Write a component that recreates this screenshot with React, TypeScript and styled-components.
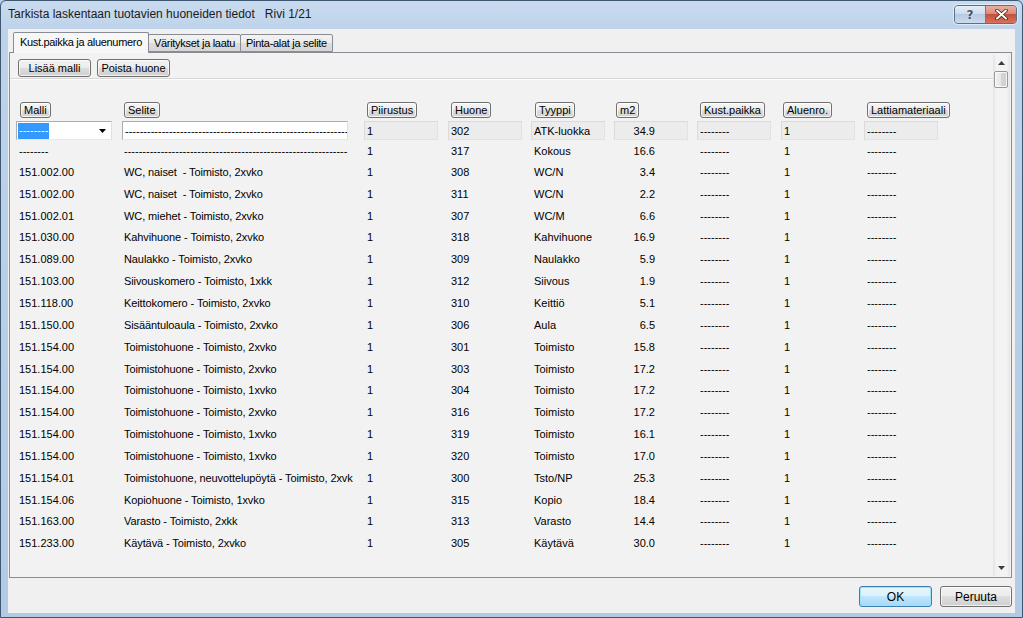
import React from "react";
import styled, { createGlobalStyle } from "styled-components";

const GlobalStyle = createGlobalStyle`
  html, body {
    margin: 0;
    padding: 0;
    background: #b8cde6;
  }
  body {
    font-family: "Liberation Sans", Arial, sans-serif;
    font-size: 11px;
    color: #000;
  }
`;

const COLUMNS = "106px 242px 84px 83px 83px 83px 84px 83px 74px";
const DASH = "--------";
const LONG_DASH = "-".repeat(61);

const Window = styled.div`
  width: 1023px;
  height: 618px;
  box-sizing: border-box;
  display: flex;
  flex-direction: column;
  border: 1px solid #3f5872;
  border-radius: 6px 6px 0 0;
  background: linear-gradient(#c9dbef, #bed3ea 28px, #b3cae5);
  overflow: hidden;
`;

const TitleBar = styled.div`
  height: 28px;
  flex: none;
  display: flex;
  align-items: flex-start;
  justify-content: space-between;
  padding: 0 5px 0 7px;
`;

const TitleText = styled.div`
  font-size: 12px;
  line-height: 12px;
  margin-top: 7px;
  color: #1b1b1b;
  white-space: pre;
`;

const CaptionGroup = styled.div`
  display: flex;
  margin-top: 4px;
  border: 1px solid #5b6f8a;
  border-radius: 4px;
  overflow: hidden;
  box-shadow: 0 0 0 1px rgba(255, 255, 255, 0.5);
`;

const CaptionButton = styled.div<{ $close?: boolean }>`
  width: 30px;
  height: 17px;
  display: flex;
  align-items: center;
  justify-content: center;
  font-family: "DejaVu Sans", sans-serif;
  font-weight: bold;
  font-size: 12px;
  color: #3e536e;
  text-shadow: 0 0 2px #fff;
  background: ${(p) =>
    p.$close
      ? "linear-gradient(#eab0a2, #d98a77 45%, #c7503a 50%, #d4745b)"
      : "linear-gradient(#e4edf8, #cddcee 45%, #b6cae3 50%, #cbdbef)"};
  & + & {
    border-left: 1px solid #6a7c93;
  }
`;

const Client = styled.div`
  flex: 1;
  margin: 0 7px 4px 7px;
  background: #f0f0f0;
  display: flex;
  flex-direction: column;
`;

const TabRow = styled.div`
  height: 20px;
  margin-top: 3px;
  padding-left: 5px;
  display: flex;
  align-items: flex-end;
  position: relative;
  z-index: 1;
`;

const Tab = styled.div<{ $active?: boolean; $w: number }>`
  box-sizing: border-box;
  width: ${(p) => p.$w}px;
  height: ${(p) => (p.$active ? "21px" : "18px")};
  margin-bottom: ${(p) => (p.$active ? "-1px" : "0")};
  padding-top: ${(p) => (p.$active ? "3px" : "2px")};
  text-align: center;
  letter-spacing: -0.3px;
  border: 1px solid #898c95;
  border-bottom: ${(p) => (p.$active ? "none" : "1px solid #898c95")};
  border-radius: 2px 2px 0 0;
  background: ${(p) =>
    p.$active ? "#f7f7f7" : "linear-gradient(#f3f3f3, #ebebeb 50%, #dddddd 50%, #d6d6d6)"};
  white-space: nowrap;
  overflow: hidden;
  & + & {
    margin-left: ${(p) => (p.$active ? "0" : "-1px")};
  }
`;

const Panel = styled.div`
  height: 526px;
  box-sizing: border-box;
  margin: 0 3px 0 1px;
  border: 1px solid #898c95;
  background: #f2f2f2;
  display: flex;
`;

const PanelBody = styled.div`
  flex: 1;
  overflow: hidden;
  display: flex;
  flex-direction: column;
`;

const Toolbar = styled.div`
  display: flex;
  gap: 6px;
  padding: 6px 0 0 8px;
`;

const PushButton = styled.div<{ $w: number; $h: number; $default?: boolean }>`
  box-sizing: border-box;
  width: ${(p) => p.$w}px;
  height: ${(p) => p.$h}px;
  display: flex;
  align-items: center;
  justify-content: center;
  border: 1px solid ${(p) => (p.$default ? "#3c7fb1" : "#707070")};
  border-radius: 3px;
  background: ${(p) =>
    p.$default
      ? "linear-gradient(#eaf6fd, #d9f0fc 50%, #bee6fd 50%, #a7d9f5)"
      : "linear-gradient(#f2f2f2, #ebebeb 50%, #dddddd 50%, #cfcfcf)"};
  box-shadow: inset 0 0 0 1px ${(p) => (p.$default ? "#9fe0fb" : "rgba(255,255,255,0.7)")};
  font-size: ${(p) => (p.$h > 19 ? "12px" : "11px")};
  white-space: nowrap;
`;

const Etched = styled.div`
  margin-top: 1px;
  height: 0;
  border-top: 1px solid #d8d8d8;
  border-bottom: 1px solid #fdfdfd;
`;

const Table = styled.div`
  padding: 22px 0 0 6px;
  display: flex;
  flex-direction: column;
`;

const GridRow = styled.div<{ $h: number }>`
  display: grid;
  grid-template-columns: ${COLUMNS};
  height: ${(p) => p.$h}px;
  align-items: center;
`;

const HeaderButton = styled.div<{ $off: number }>`
  box-sizing: border-box;
  justify-self: start;
  margin-left: ${(p) => p.$off}px;
  height: 16px;
  padding: 0 3px;
  display: flex;
  align-items: center;
  border: 1px solid #707070;
  border-radius: 3px;
  background: linear-gradient(#f6f6f6, #ececec 50%, #dedede 50%, #d2d2d2);
  box-shadow: inset 0 0 0 1px rgba(255, 255, 255, 0.75);
  white-space: nowrap;
`;

const Combo = styled.div`
  box-sizing: border-box;
  width: 96px;
  height: 19px;
  border: 1px solid #abadb3;
  border-right-color: #dbdfe6;
  border-bottom-color: #e3e9ef;
  background: #fff;
  display: flex;
  align-items: center;
  justify-content: space-between;
  padding: 0 5px 0 1px;
`;

const Selected = styled.span`
  background: #3399ff;
  color: #fff;
  padding: 1px 1px 2px;
  line-height: 13px;
`;

const TextBox = styled.div<{ $w: number; $readOnly?: boolean; $right?: boolean }>`
  box-sizing: border-box;
  width: ${(p) => p.$w}px;
  height: 19px;
  border: 1px solid ${(p) => (p.$readOnly ? "#dadada" : "#abadb3")};
  border-right-color: ${(p) => (p.$readOnly ? "#e2e2e2" : "#dbdfe6")};
  border-bottom-color: ${(p) => (p.$readOnly ? "#e2e2e2" : "#e3e9ef")};
  background: ${(p) => (p.$readOnly ? "#ececec" : "#fff")};
  display: flex;
  align-items: center;
  justify-content: ${(p) => (p.$right ? "flex-end" : "flex-start")};
  padding: ${(p) => (p.$right ? "0 32px 0 0" : "0 0 0 2px")};
  overflow: hidden;
  white-space: pre;
`;

const Cell = styled.div<{ $pad: number; $right?: boolean; $w?: number }>`
  padding-left: ${(p) => (p.$right ? 0 : p.$pad)}px;
  padding-right: ${(p) => (p.$right ? 33 : 0)}px;
  width: ${(p) => (p.$w ? `${p.$w}px` : "auto")};
  box-sizing: border-box;
  text-align: ${(p) => (p.$right ? "right" : "left")};
  overflow: hidden;
  white-space: pre;
`;

const SeliteText = styled.span<{ $tight: boolean }>`
  letter-spacing: ${(p) => (p.$tight ? "-0.1px" : "0")};
`;

const ScrollBar = styled.div`
  width: 17px;
  margin: 2px 1px 1px 0;
  display: flex;
  flex-direction: column;
  background: linear-gradient(90deg, #e3e3e3, #f3f3f3 20%, #f3f3f3 80%, #e6e6e6);
`;

const ScrollArrow = styled.div`
  height: 16px;
  display: flex;
  align-items: center;
  justify-content: center;
`;

const Thumb = styled.div`
  height: 15px;
  margin: 0 2px 0 1px;
  border: 1px solid #979797;
  border-radius: 2px;
  background: linear-gradient(90deg, #f2f2f2, #e6e6e6 50%, #d6d6d6 50%, #cfcfcf);
  box-shadow: inset 0 0 0 1px rgba(255, 255, 255, 0.8);
`;

const Track = styled.div`
  flex: 1;
`;

const Footer = styled.div`
  flex: 1;
  display: flex;
  justify-content: flex-end;
  align-items: flex-start;
  gap: 8px;
  padding: 8px 3px 0 0;
`;

type Row = [string, string, string, string, string, string];

const rows: Row[] = [
  ["--------", LONG_DASH, "1", "317", "Kokous", "16.6"],
  ["151.002.00", "WC, naiset  - Toimisto, 2xvko", "1", "308", "WC/N", "3.4"],
  ["151.002.00", "WC, naiset  - Toimisto, 2xvko", "1", "311", "WC/N", "2.2"],
  ["151.002.01", "WC, miehet - Toimisto, 2xvko", "1", "307", "WC/M", "6.6"],
  ["151.030.00", "Kahvihuone - Toimisto, 2xvko", "1", "318", "Kahvihuone", "16.9"],
  ["151.089.00", "Naulakko - Toimisto, 2xvko", "1", "309", "Naulakko", "5.9"],
  ["151.103.00", "Siivouskomero - Toimisto, 1xkk", "1", "312", "Siivous", "1.9"],
  ["151.118.00", "Keittokomero - Toimisto, 2xvko", "1", "310", "Keittiö", "5.1"],
  ["151.150.00", "Sisääntuloaula - Toimisto, 2xvko", "1", "306", "Aula", "6.5"],
  ["151.154.00", "Toimistohuone - Toimisto, 2xvko", "1", "301", "Toimisto", "15.8"],
  ["151.154.00", "Toimistohuone - Toimisto, 2xvko", "1", "303", "Toimisto", "17.2"],
  ["151.154.00", "Toimistohuone - Toimisto, 1xvko", "1", "304", "Toimisto", "17.2"],
  ["151.154.00", "Toimistohuone - Toimisto, 2xvko", "1", "316", "Toimisto", "17.2"],
  ["151.154.00", "Toimistohuone - Toimisto, 1xvko", "1", "319", "Toimisto", "16.1"],
  ["151.154.00", "Toimistohuone - Toimisto, 1xvko", "1", "320", "Toimisto", "17.0"],
  ["151.154.01", "Toimistohuone, neuvottelupöytä - Toimisto, 2xvk", "1", "300", "Tsto/NP", "25.3"],
  ["151.154.06", "Kopiohuone - Toimisto, 1xvko", "1", "315", "Kopio", "18.4"],
  ["151.163.00", "Varasto - Toimisto, 2xkk", "1", "313", "Varasto", "14.4"],
  ["151.233.00", "Käytävä - Toimisto, 2xvko", "1", "305", "Käytävä", "30.0"],
];

const headers: [string, number][] = [
  ["Malli", 4],
  ["Selite", 2],
  ["Piirustus", 3],
  ["Huone", 3],
  ["Tyyppi", 4],
  ["m2", 2],
  ["Kust.paikka", 3],
  ["Aluenro.", 2],
  ["Lattiamateriaali", 3],
];

const Triangle = ({ up, color = "#000" }: { up?: boolean; color?: string }) => (
  <svg width="7" height="4" viewBox="0 0 7 4">
    <path d={up ? "M3.5 0 L7 4 L0 4 Z" : "M0 0 L7 0 L3.5 4 Z"} fill={color} />
  </svg>
);

const CloseGlyph = () => (
  <svg width="13" height="11" viewBox="0 0 13 11">
    <path
      d="M2 1.5 L11 9.5 M11 1.5 L2 9.5"
      stroke="#4a1c14"
      strokeWidth="3.6"
      strokeLinecap="round"
    />
    <path
      d="M2 1.5 L11 9.5 M11 1.5 L2 9.5"
      stroke="#fff"
      strokeWidth="2"
      strokeLinecap="round"
    />
  </svg>
);

export default function App() {
  return (
    <>
      <GlobalStyle />
      <Window>
        <TitleBar>
          <TitleText>Tarkista laskentaan tuotavien huoneiden tiedot   Rivi 1/21</TitleText>
          <CaptionGroup>
            <CaptionButton>?</CaptionButton>
            <CaptionButton $close>
              <CloseGlyph />
            </CaptionButton>
          </CaptionGroup>
        </TitleBar>

        <Client>
          <TabRow>
            <Tab $active $w={136}>Kust.paikka ja aluenumero</Tab>
            <Tab $w={93}>Väritykset ja laatu</Tab>
            <Tab $w={93}>Pinta-alat ja selite</Tab>
          </TabRow>

          <Panel>
            <PanelBody>
              <Toolbar>
                <PushButton $w={73} $h={18}>Lisää malli</PushButton>
                <PushButton $w={73} $h={18}>Poista huone</PushButton>
              </Toolbar>
              <Etched />

              <Table>
                <GridRow $h={16}>
                  {headers.map(([label, off]) => (
                    <HeaderButton key={label} $off={off}>
                      {label}
                    </HeaderButton>
                  ))}
                </GridRow>

                <GridRow $h={19} style={{ marginTop: 3 }}>
                  <Combo>
                    <Selected>{DASH}</Selected>
                    <Triangle />
                  </Combo>
                  <TextBox $w={226}>{LONG_DASH}</TextBox>
                  <TextBox $w={74} $readOnly>1</TextBox>
                  <TextBox $w={74} $readOnly>302</TextBox>
                  <TextBox $w={74} $readOnly>ATK-luokka</TextBox>
                  <TextBox $w={74} $readOnly $right>34.9</TextBox>
                  <TextBox $w={74} $readOnly>{DASH}</TextBox>
                  <TextBox $w={74} $readOnly>1</TextBox>
                  <TextBox $w={74} $readOnly>{DASH}</TextBox>
                </GridRow>

                {rows.map((r, i) => (
                  <GridRow key={i} $h={i === 0 ? 21 : 21.85}>
                    <Cell $pad={3}>{r[0]}</Cell>
                    <Cell $pad={2} $w={238}>
                      <SeliteText $tight={i > 0}>{r[1]}</SeliteText>
                    </Cell>
                    <Cell $pad={3}>{r[2]}</Cell>
                    <Cell $pad={3}>{r[3]}</Cell>
                    <Cell $pad={3}>{r[4]}</Cell>
                    <Cell $pad={0} $right $w={74}>{r[5]}</Cell>
                    <Cell $pad={3}>{DASH}</Cell>
                    <Cell $pad={3}>1</Cell>
                    <Cell $pad={3}>{DASH}</Cell>
                  </GridRow>
                ))}
              </Table>
            </PanelBody>

            <ScrollBar>
              <ScrollArrow>
                <Triangle up color="#3b3b3b" />
              </ScrollArrow>
              <Thumb />
              <Track />
              <ScrollArrow>
                <Triangle color="#3b3b3b" />
              </ScrollArrow>
            </ScrollBar>
          </Panel>

          <Footer>
            <PushButton $w={73} $h={21} $default>OK</PushButton>
            <PushButton $w={72} $h={21}>Peruuta</PushButton>
          </Footer>
        </Client>
      </Window>
    </>
  );
}
